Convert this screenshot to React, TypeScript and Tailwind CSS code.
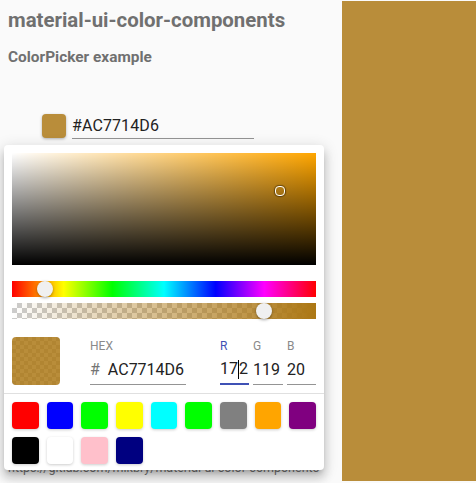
import React from "react";

const swatches = [
  "#ff0000", "#0000ff", "#00ff00", "#ffff00", "#00ffff", "#00ff00", "#808080", "#ffa500", "#800080",
  "#000000", "#ffffff", "#ffc0cb", "#000080",
];

export default function App() {
  return (
    <div className="relative flex h-[483px] w-[476px] bg-[#fafafa] font-['Roboto',sans-serif] overflow-hidden">
      <div className="w-[342px] px-2 pt-1 flex flex-col">
        <h1 className="text-[20.4px] leading-[32px] font-bold text-[#707070] whitespace-nowrap">material-ui-color-components</h1>
        <h2 className="mt-[11px] text-[15.4px] leading-[20px] font-bold text-[#707070] whitespace-nowrap">ColorPicker example</h2>
        <div className="mt-[45px] ml-[34px] flex items-center gap-[6px]">
          <div className="w-6 h-6 rounded bg-[#b98d3a] shadow-[0px_1px_3px_rgba(0,0,0,0.3)]" />
          <div className="w-[182px] border-b border-[#949494] h-[27px] flex items-center pt-[2px] text-[16px] text-[#222] tracking-[0.1px]">#AC7714D6</div>
        </div>
        <div className="mt-[321px] text-[12.5px] leading-[16px] text-[#777] whitespace-nowrap">https://gitlab.com/mikbry/material-ui-color-components</div>
      </div>
      <div className="flex-1 mt-px mb-[2px] bg-[#b98d3a]" />

      <div className="absolute left-[4px] top-[145px] w-[320px] h-[325px] bg-white rounded shadow-[0px_5px_5px_-3px_rgba(0,0,0,0.2),0px_8px_10px_1px_rgba(0,0,0,0.14),0px_3px_14px_2px_rgba(0,0,0,0.12)]">
        <div className="px-2 pt-2">
          <div className="relative h-[112px] bg-[#ffa600] bg-[image:linear-gradient(to_top,#000,transparent),linear-gradient(to_right,#fff,rgba(255,255,255,0))]">
            <div className="absolute left-[263px] top-[33px] w-[10px] h-[10px] rounded-[4px] border-[1.5px] border-white shadow-[0_0_1px_1px_rgba(0,0,0,0.4)]" />
          </div>
          <div className="relative mt-4 h-4 bg-[linear-gradient(to_right,#f00_0%,#ff0_17%,#0f0_33%,#0ff_50%,#00f_67%,#f0f_83%,#f00_100%)]">
            <div className="absolute left-[25px] top-0 w-4 h-4 rounded-full bg-[#f0f0f0] shadow-[0px_1px_3px_rgba(0,0,0,0.35)]" />
          </div>
          <div className="relative mt-[6px] h-4 bg-white bg-[image:repeating-conic-gradient(#cccccc_0%_25%,#ffffff_0%_50%)] bg-[length:10px_10px]">
            <div className="absolute inset-0 bg-[linear-gradient(to_right,rgba(172,119,20,0),rgb(172,119,20))]" />
            <div className="absolute left-[244px] top-0 w-4 h-4 rounded-full bg-[#f0f0f0] shadow-[0px_1px_3px_rgba(0,0,0,0.35)]" />
          </div>
          <div className="mt-[18px] flex h-12">
            <div className="relative w-12 h-12 rounded overflow-hidden bg-white bg-[image:repeating-conic-gradient(#cccccc_0%_25%,#ffffff_0%_50%)] bg-[length:8px_8px]">
              <div className="absolute inset-0 bg-[rgba(172,119,20,0.84)]" />
            </div>
            <div className="ml-[30px] w-[96px] flex flex-col">
              <div className="mt-[2px] text-[12px] leading-[14px] text-[#8a8a8a]">HEX</div>
              <div className="mt-auto h-[30px] border-b border-[#949494] flex items-center text-[16px]">
                <span className="text-[#757575]">#</span>
                <span className="ml-[8px] text-[#222]">AC7714D6</span>
              </div>
            </div>
            <div className="ml-[34px] w-[29px] flex flex-col">
              <div className="mt-[2px] text-[12px] leading-[14px] text-[#3f51b5]">R</div>
              <div className="mt-auto h-[30px] border-b-2 border-[#3f51b5] flex items-center text-[16px] text-[#222]">
                <span>17</span><span className="inline-block w-px h-[19px] bg-black" /><span>2</span>
              </div>
            </div>
            <div className="ml-[4px] w-[30px] flex flex-col">
              <div className="mt-[2px] text-[12px] leading-[14px] text-[#8a8a8a]">G</div>
              <div className="mt-auto h-[30px] border-b border-[#949494] flex items-center text-[16px] text-[#222]">119</div>
            </div>
            <div className="ml-[4px] w-[29px] flex flex-col">
              <div className="mt-[2px] text-[12px] leading-[14px] text-[#8a8a8a]">B</div>
              <div className="mt-auto h-[30px] border-b border-[#949494] flex items-center text-[16px] text-[#222]">20</div>
            </div>
          </div>
        </div>
        <div className="mt-2 h-px bg-[#e0e0e0]" />
        <div className="px-2 pt-2 grid grid-cols-9 gap-x-2 gap-y-2">
          {swatches.map((c, i) => (
            <div
              key={i}
              className="h-[27px] rounded shadow-[0px_1px_3px_rgba(0,0,0,0.2)]"
              style={{ backgroundColor: c }}
            />
          ))}
        </div>
      </div>
    </div>
  );
}
